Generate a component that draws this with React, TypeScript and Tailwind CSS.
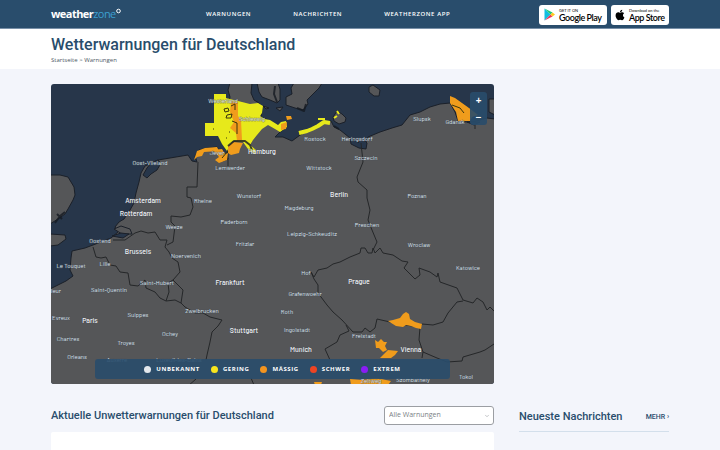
import { FaApple } from "react-icons/fa";
import { ChevronDown } from "lucide-react";

const navItems = ["Warnungen", "Nachrichten", "Weatherzone App"];

const legend = [
  { label: "Unbekannt", color: "bg-[#e4e8ec]" },
  { label: "Gering", color: "bg-[#f8e51d]" },
  { label: "Mässig", color: "bg-[#f3941f]" },
  { label: "Schwer", color: "bg-[#ee4423]" },
  { label: "Extrem", color: "bg-[#8a1df5]" },
];

type Place = [name: string, x: number, y: number];

const capitals: Place[] = [
  ["Amsterdam", 143, 203],
  ["Rotterdam", 136, 216],
  ["Brussels", 138, 254],
  ["Paris", 90, 323],
  ["Frankfurt", 230, 285],
  ["Stuttgart", 244, 333],
  ["Munich", 301, 352],
  ["Hamburg", 262, 154],
  ["Berlin", 339, 197],
  ["Prague", 359, 284],
  ["Vienna", 411, 352],
];

const towns: Place[] = [
  ["Westerland", 223, 103],
  ["Schleswig", 252, 121],
  ["Jever", 217, 155],
  ["Rostock", 315, 141],
  ["Heringsdorf", 357, 141],
  ["Slupsk", 422, 121],
  ["Gdansk", 455, 124],
  ["Oost-Vlieland", 150, 165],
  ["Lemwerder", 230, 170],
  ["Wittstock", 319, 170],
  ["Szczecin", 366, 160],
  ["Rheine", 203, 203],
  ["Wunstorf", 249, 198],
  ["Magdeburg", 299, 210],
  ["Poznan", 417, 198],
  ["Paderborn", 234, 224],
  ["Weeze", 174, 229],
  ["Preschen", 367, 227],
  ["Leipzig-Schkeuditz", 312, 236],
  ["Fritzlar", 245, 246],
  ["Noervenich", 186, 258],
  ["Wroclaw", 419, 247],
  ["Katowice", 468, 270],
  ["Oostend", 100, 243],
  ["Lille", 105, 266],
  ["Le Touquet", 71, 268],
  ["Saint-Quentin", 109, 292],
  ["Saint-Hubert", 157, 285],
  ["leur", 56, 293],
  ["Hof", 306, 275],
  ["Grafenwoehr", 305, 296],
  ["Roth", 287, 314],
  ["Ingolstadt", 297, 332],
  ["Zweibrucken", 202, 313],
  ["Evreux", 61, 320],
  ["Suippes", 138, 317],
  ["Chartres", 68, 341],
  ["Ochey", 170, 336],
  ["Troyes", 126, 345],
  ["Orleans", 77, 359],
  ["Auxerre", 117, 362],
  ["Luxeuil-les-Bains", 179, 362],
  ["Freistadt", 364, 338],
  ["Zeltweg", 371, 383],
  ["Szombathely", 413, 382],
  ["Tokol", 466, 379],
];

const Logo = () => (
  <a
    href="#"
    className="flex w-[155px] items-center font-['Open_Sans'] text-[11px] leading-4 font-bold tracking-tighter text-white"
  >
    weather<span className="font-normal text-[#3c9fd0]">zone</span>
    <svg viewBox="0 0 5 12" className="h-3 w-[5px]" fill="none" stroke="#fff">
      <circle cx="2.5" cy="3" r="1.8" />
    </svg>
  </a>
);

const PlayIcon = () => (
  <svg viewBox="0 0 22 26" className="h-[13px] w-[11px]">
    <path d="M1 1v24l12-12z" fill="#12bfe0" />
    <path d="M1 1l16 8-4 4z" fill="#20c979" />
    <path d="M1 25l16-8-4-4z" fill="#ee365d" />
    <path d="M17 9l5 4-5 4-4-4z" fill="#ffc91f" />
  </svg>
);

const Header = () => (
  <header className="border-b border-[#7890a8] bg-[#294d6c] px-[51px]">
    <div className="flex h-7 items-center">
      <Logo />
      <nav className="flex flex-1 gap-[42px] font-['Open_Sans'] text-[6px] leading-3 font-semibold tracking-widest text-white uppercase">
        {navItems.map((item) => (
          <a key={item} href="#">
            {item}
          </a>
        ))}
      </nav>
      <div className="flex gap-1 pt-px font-['Lato'] text-black">
        <a
          href="#"
          className="flex h-5 w-[68px] items-center gap-1 rounded-[3px] bg-white pl-[5px]"
        >
          <PlayIcon />
          <span>
            <span className="block text-[4px] leading-[5px]">GET IT ON</span>
            <span className="block text-[9px] leading-[9px] font-semibold tracking-tighter whitespace-nowrap">
              Google Play
            </span>
          </span>
        </a>
        <a
          href="#"
          className="flex h-5 w-[58px] items-center gap-[3px] rounded-[3px] bg-white pl-[3px]"
        >
          <FaApple className="size-3 shrink-0" />
          <span>
            <span className="block text-[4px] leading-[5px] whitespace-nowrap">
              Download on the
            </span>
            <span className="block text-[9px] leading-[9px] font-semibold tracking-tighter whitespace-nowrap">
              App Store
            </span>
          </span>
        </a>
      </div>
    </div>
  </header>
);

const WeatherMap = () => (
  <svg viewBox="51 84 443 300" className="block w-full bg-[#27364a]">
    {/* land */}
    <g fill="#555658" stroke="#1b2029" strokeWidth="1" strokeLinejoin="round">
      <path d="M50 289L60 284 66 281 73 276 70 270 71 258 72 251 85 248 93 245 111 238 118 232 115 227 119 222 124 219 130 210 134 203 136 193 139 182 141 173 145 166 158 160 170 158 188 155 192 161 197 162 195 156 199 150 208 148 217 147 221 155 223 161 228 159 228 151 232 142 226 134 228 125 231 113 228 106 230 97 228 90 230 83H252L251 93 254 100 259 103 262 109 261 117 268 120 276 126 284 122 287 127 280 132 275 137 283 137 292 141 296 138 303 133 312 128 322 123 331 121 334 127 340 130 350 138 358 142 366 142 368 137 380 132 392 128 402 125 410 115 420 112 430 107 440 104 450 103 455 112 458 121 467 122 473 122 487 118 495 119V385H50z" />
      <path d="M50 175L60 175 68 177 74 187 75 195 73 200 68 209 65 214 58 219 50 224z" />
      <path d="M50 234L65 235 66 239 58 245 50 246z" />
      <path d="M257 83H278L280 89 280 100 277 103 270 100 262 97 259 92z" />
      <path d="M286 97L292 94 291 88 294 83H322L319 88 312 95 307 100 308 104 303 110 295 108 286 105z" />
      <path d="M333 117L337 111 342 114 346 118 345 122 339 124 334 121z" />
      <path d="M369 87l4-2 7 5-1 6-5 0-5-4z" />
      <path d="M489 99h6v16l-6-3z" />
      <path d="M263 106l6 2-3 1zM276 108l7-1-3 4z" />
      <path d="M114 229l7-3 9 3 2 5-10 0z" />
    </g>
    <g fill="#27364a" stroke="#1b2029" strokeWidth="1" strokeLinejoin="round">
      <path d="M143 175l4-7 4-5 7-3 3 3-4 7-6 4-4 4z" />
      <path d="M350 138l7 2 8 1 2 2-1 6-7-1-8-4z" />
      <path d="M112 236l9-3 8 1-6 4z" />
      <path d="M467 122h13l-6 3z" />
    </g>

    {/* borders */}
    <g fill="none" stroke="#252729" strokeWidth="1" strokeLinejoin="round">
      <path d="M93 247L96 257 101 258 106 257 110 265 116 266 120 272 128 273 130 285 138 286 145 280 146 288 155 292 160 298 166 301 175 300 181 303 185 307 195 313 203 313 210 317 222 320 218 326 212 332 210 342 207 355 206 360" />
      <path d="M113 240L125 240 135 233 141 231 148 233 155 232 160 240 167 240 165 247 169 252 172 258 178 262 180 272 173 280 168 283 169 292 166 301M173 280L183 290 181 303" />
      <path d="M198 162L197 187 187 187 187 197 191 198 193 207 190 215 181 217 171 216 171 222 175 226 173 242 167 245" />
      <path d="M361 143L363 162 357 177 358 182 367 190 367 198 370 210 368 220 372 230 377 242 373 250" />
      <path d="M360 253L361 248 365 248 368 253 372 253 373 248 375 253 380 248 383 253 393 255 402 261 408 262 404 268 415 279 420 275 419 268 430 272 437 277 438 273 440 282 457 288 463 300 473 303 477 298 483 302 487 310 490 307 494 311" />
      <path d="M360 253L350 257 340 262 333 264 327 268 318 270 314 277 311 272 314 279 318 285 318 293 327 305 333 312 342 320 353 332 362 332 365 328 370 332 375 328 377 319 390 322 405 325 420 327 422 324 433 325 443 322 448 313 457 302 463 301" />
      <path d="M346 325L349 331 340 335 337 342 325 349 330 360M420 327L419 340 423 352 422 358M423 352L437 358 447 362 462 361 463 357 480 352 485 350 494 344" />
      <path d="M196 379L188 386M251 378L254 385M228 158V166M475 125V129" />
    </g>

    {/* minor warnings */}
    <path
      fill="#e7e91b"
      d="M214 94H226V98L238 101 250 104 258 103 263 106 262 113 260 116 265 119 270 120 278 125 281 122 286 121 287 127 280 132 275 129 268 125 262 129 257 135 253 140 250 145 256 150 255 154 248 149 243 142 233 141 230 145 227 151 222 144 218 136H205V123H214z"
    />
    <g fill="none" stroke="#e7e91b" strokeWidth="4" strokeLinejoin="bevel">
      <path d="M299 133L307 131 312 129 318 126 324 122 330 123" />
      <path d="M318 119h7M337 111l2 3M334 118l3-2" strokeWidth="2" />
    </g>

    {/* moderate warnings */}
    <g fill="#f09c1c">
      <path d="M194 160L197 151 205 148 217 147 219 151 204 152 202 156 197 157z" />
      <path d="M213 150L222 149 225 154 228 153 227 160 219 163 215 160 219 157z" />
      <path d="M228 146L233 142 243 143 240 149 239 153 231 155 228 153z" />
      <path d="M231 101L238 102V116L241 120 242 140 237 141 236 133 230 128 234 122 230 112z" />
      <path d="M281 124l6-2-1 7-5 1zM286 116l5 0 1 3-5 1z" />
      <path d="M450 96L455 98 469 108 478 115 472 117 470 121H458L456 112 450 103z" />
      <path d="M388 321L393 320 400 318 403 314 406 312 409 314 410 319 415 322 422 324 421 329 416 328 411 326 406 325 403 327 396 326z" />
      <path d="M375 340L378 342 381 339 384 342 387 342 385 346 387 350 383 352 379 348 376 348zM380 358L384 354 388 350 398 351 395 355 391 358z" />
      <path d="M350 379L362 380 376 378 391 381 388 385 351 385zM314 382h8l-1 3h-6z" />
    </g>
    <g fill="none" stroke="#38340d" strokeWidth="1">
      <path d="M224 109l4-1 1 3-4 1zM227 115l5-1-1 4-5 0zM231 106l4-2 0 6M232 121l5 2 0 11" />
      <path d="M213 129h1M226 138h1M229 132h1M452 105l8 3 4 5M222 158l6-7" />
    </g>
    <path
      fill="none"
      stroke="#151a22"
      strokeWidth="2"
      strokeLinejoin="round"
      d="M228 146L234 141 245 141 250 145 252 150M275 86l-1 8 3 8M297 108l7 3 2-7M334 126l5 3M353 139l6 3M55 223l5-7 5-4M57 214l5 5"
      opacity=".8"
    />

    <g
      fontFamily="Barlow, Roboto, sans-serif"
      fontSize="6"
      textAnchor="middle"
      fill="#dbe3ee"
      stroke="#4a5058"
      strokeOpacity=".5"
      paintOrder="stroke"
    >
      {towns.map(([name, x, y]) => (
        <text key={name} x={x} y={y}>
          {name}
        </text>
      ))}
    </g>
    <g
      fontFamily="Barlow, Roboto, sans-serif"
      fontSize="7"
      fontWeight="500"
      textAnchor="middle"
      fill="#f2f4f7"
      stroke="#4a5058"
      strokeOpacity=".5"
      paintOrder="stroke"
    >
      {capitals.map(([name, x, y]) => (
        <text key={name} x={x} y={y}>
          {name}
        </text>
      ))}
    </g>
  </svg>
);

const MapPanel = () => (
  <section className="relative overflow-hidden rounded-[3px]">
    <WeatherMap />
    <div className="absolute top-2 right-[7px] grid h-[33px] w-[17px] grid-rows-2 rounded-[3px] bg-[#294d6c]/90 font-['Open_Sans'] text-[10px] leading-4 font-bold text-white">
      <button aria-label="Zoom in">+</button>
      <button aria-label="Zoom out">−</button>
    </div>
    <ul className="absolute inset-x-11 bottom-[5px] flex h-5 items-center justify-center gap-[11px] rounded-[3px] bg-[#294d6c]/90 font-['Open_Sans'] text-[6px] leading-3 font-bold tracking-widest text-white uppercase">
      {legend.map(({ label, color }) => (
        <li key={label} className="flex items-center gap-[5px]">
          <span className={`size-[7px] rounded-full ${color}`} />
          {label}
        </li>
      ))}
    </ul>
  </section>
);

export default function App() {
  return (
    <div className="min-h-screen bg-[#f3f5fb] font-['Roboto'] text-[#294d6c]">
      <Header />
      <div className="bg-white px-[51px] pt-1 pb-[5px]">
        <h1 className="text-[16px] leading-6 font-medium">
          Wetterwarnungen für Deutschland
        </h1>
        <p className="font-['Open_Sans'] text-[6px] leading-[7px] text-[#4d5864]">
          <a href="#">Startseite</a> &gt; <a href="#">Warnungen</a>
        </p>
      </div>

      <main className="grid grid-cols-[1fr_150px] gap-x-[25px] px-[51px] pt-[15px]">
        <MapPanel />
        <div />
        <div className="pt-[22px]">
          <div className="flex h-[19px] items-center justify-between">
            <h2 className="pt-px text-[11px] leading-4 font-medium">
              Aktuelle Unwetterwarnungen für Deutschland
            </h2>
            <div className="relative flex items-center">
              <select
                aria-label="Warnungen filtern"
                className="h-[19px] w-[110px] appearance-none rounded-[3px] border border-[#9b9ea3] bg-white pl-1 font-['Open_Sans'] text-[7px] text-[#7b7f85]"
              >
                <option>Alle Warnungen</option>
              </select>
              <ChevronDown className="pointer-events-none absolute right-1 size-[6px] text-[#8b8f94]" />
            </div>
          </div>
          <div className="mt-[7px] h-5 rounded-t-[2px] bg-white" />
        </div>
        <aside className="pt-[22px]">
          <div className="flex h-[26px] items-center justify-between border-b border-[#d3dfeb] pb-1">
            <h2 className="text-[11px] leading-4 font-medium">
              Neueste Nachrichten
            </h2>
            <a href="#" className="text-[7px] leading-4 font-medium">
              MEHR ›
            </a>
          </div>
        </aside>
      </main>
    </div>
  );
}
